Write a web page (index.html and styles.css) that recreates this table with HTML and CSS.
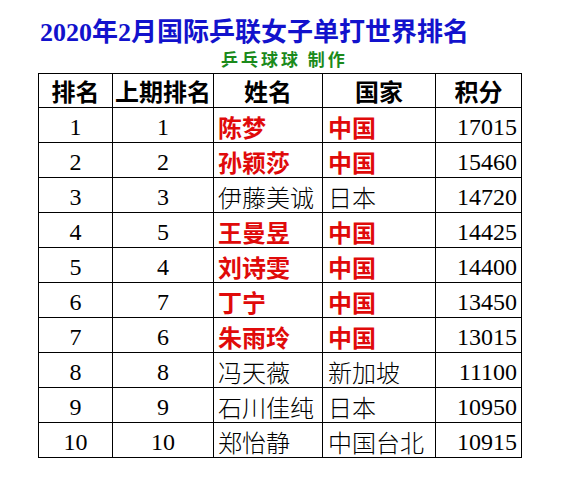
FILE: index.html
```html
<!DOCTYPE html>
<html lang="zh">
<head>
<meta charset="utf-8">
<title>2020年2月国际乒联女子单打世界排名</title>
<link rel="stylesheet" href="styles.css">
</head>
<body>
<div class="page">
  <h1 class="title">2020年2月国际乒联女子单打世界排名</h1>
  <div class="subtitle">乒乓球球 制作</div>
  <table class="rank">
    <colgroup>
      <col class="c1"><col class="c2"><col class="c3"><col class="c4"><col class="c5">
    </colgroup>
    <thead>
      <tr><th>排名</th><th>上期排名</th><th>姓名</th><th>国家</th><th>积分</th></tr>
    </thead>
    <tbody>
      <tr><td class="num">1</td><td class="num">1</td><td class="name cn">陈梦</td><td class="country cn">中国</td><td class="pts">17015</td></tr>
      <tr><td class="num">2</td><td class="num">2</td><td class="name cn">孙颖莎</td><td class="country cn">中国</td><td class="pts">15460</td></tr>
      <tr><td class="num">3</td><td class="num">3</td><td class="name">伊藤美诚</td><td class="country">日本</td><td class="pts">14720</td></tr>
      <tr><td class="num">4</td><td class="num">5</td><td class="name cn">王曼昱</td><td class="country cn">中国</td><td class="pts">14425</td></tr>
      <tr><td class="num">5</td><td class="num">4</td><td class="name cn">刘诗雯</td><td class="country cn">中国</td><td class="pts">14400</td></tr>
      <tr><td class="num">6</td><td class="num">7</td><td class="name cn">丁宁</td><td class="country cn">中国</td><td class="pts">13450</td></tr>
      <tr><td class="num">7</td><td class="num">6</td><td class="name cn">朱雨玲</td><td class="country cn">中国</td><td class="pts">13015</td></tr>
      <tr><td class="num">8</td><td class="num">8</td><td class="name">冯天薇</td><td class="country">新加坡</td><td class="pts">11100</td></tr>
      <tr><td class="num">9</td><td class="num">9</td><td class="name">石川佳纯</td><td class="country">日本</td><td class="pts">10950</td></tr>
      <tr><td class="num">10</td><td class="num">10</td><td class="name">郑怡静</td><td class="country">中国台北</td><td class="pts">10915</td></tr>
    </tbody>
  </table>
</div>
</body>
</html>
```
FILE: styles.css
```css
html, body {
  margin: 0;
  padding: 0;
  background: #fff;
}
.page {
  width: 568px;
  height: 487px;
  padding-top: 18px;
  box-sizing: border-box;
  font-family: "Liberation Serif", "Noto Sans CJK SC", serif;
}
.title {
  margin: 0 0 0 40px;
  height: 30px;
  line-height: 30px;
  font-size: 26px;
  font-weight: bold;
  color: #1212cc;
  white-space: nowrap;
}
.subtitle {
  height: 22px;
  line-height: 22px;
  margin-left: 221px;
  font-family: "Noto Sans CJK SC", sans-serif;
  font-size: 17px;
  font-weight: bold;
  letter-spacing: 3px;
  color: #1b8a1b;
}
.rank {
  margin: 3px 0 0 38px;
  border-collapse: collapse;
  table-layout: fixed;
  width: 484px;
}
.c1 { width: 74px; }
.c2 { width: 101px; }
.c3 { width: 109px; }
.c4 { width: 113px; }
.c5 { width: 86px; }
.rank th, .rank td {
  border: 1px solid #000;
  padding: 0;
  vertical-align: bottom;
  line-height: 28px;
  font-size: 24px;
  white-space: nowrap;
}
.rank th {
  height: 34px;
  box-sizing: border-box;
  padding-bottom: 2px;
  font-family: "Noto Sans CJK SC", sans-serif;
  font-weight: bold;
  color: #000;
  text-align: center;
}
.rank td {
  height: 35px;
  padding-bottom: 1px;
  box-sizing: border-box;
  color: #000;
}
.num { text-align: center; }
.name { text-align: left; padding-left: 4px !important; font-family: "Noto Sans CJK SC", sans-serif; font-weight: 300; }
.country { text-align: left; padding-left: 5px !important; font-family: "Noto Sans CJK SC", sans-serif; font-weight: 300; }
.pts { text-align: right; padding-right: 4px !important; }
.rank td.cn {
  color: #e00a0a;
  font-weight: bold;
}
```
